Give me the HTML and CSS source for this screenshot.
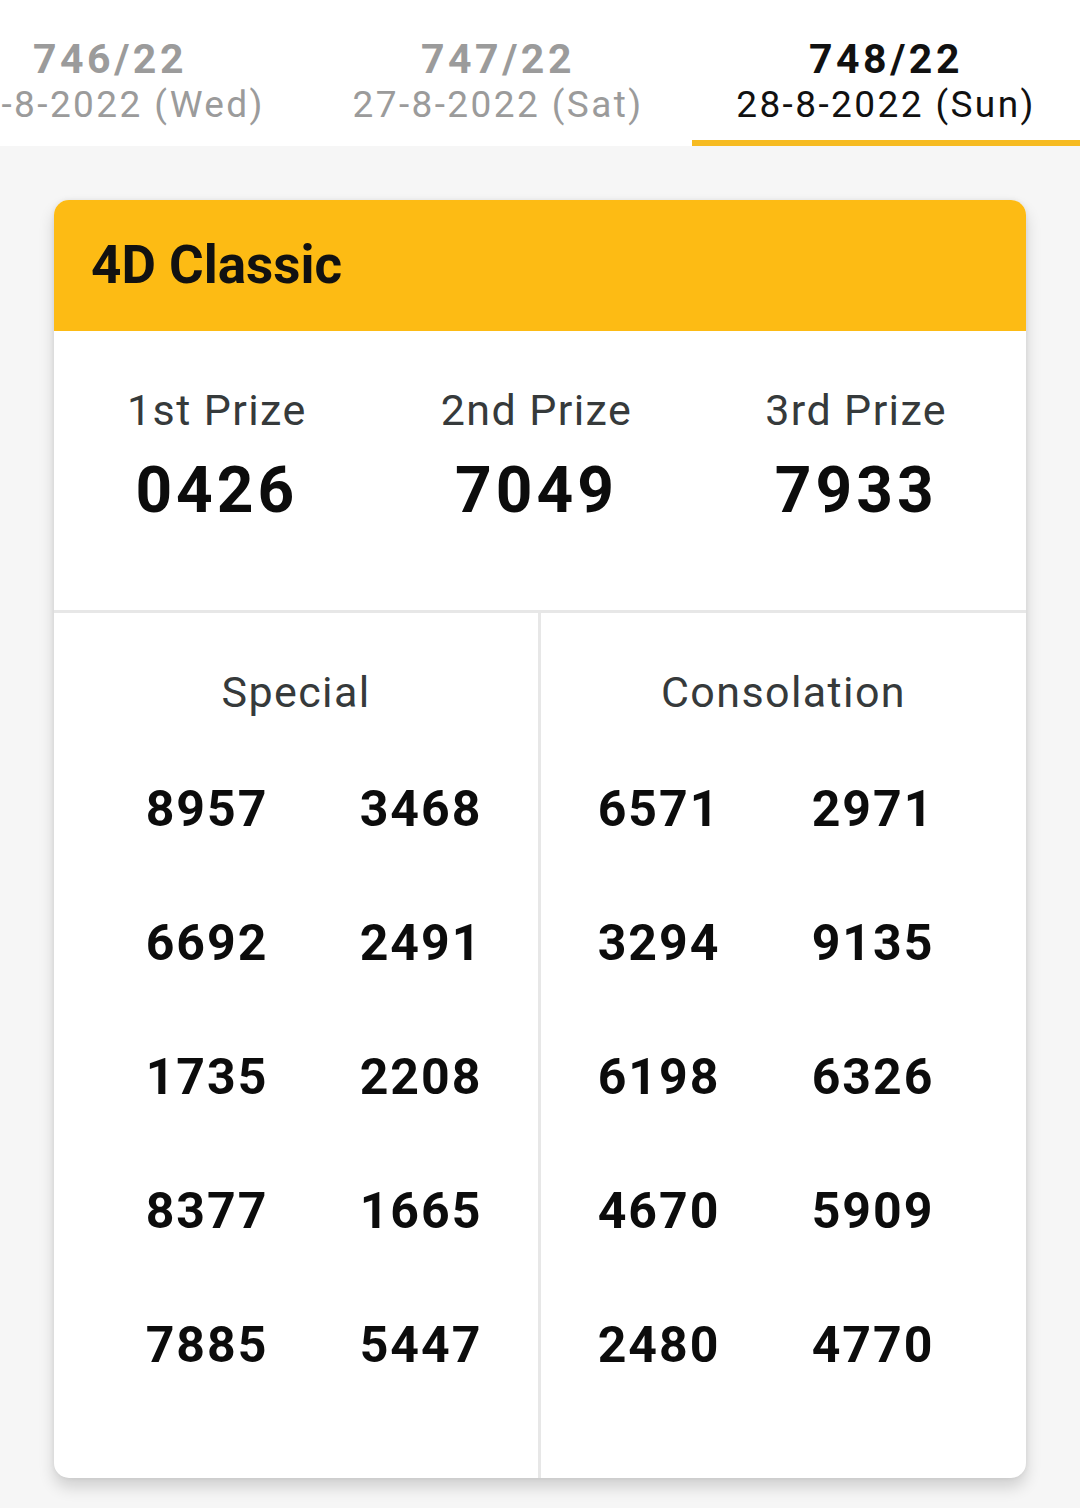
FILE: index.html
```html
<!DOCTYPE html>
<html lang="en">
<head>
<meta charset="utf-8">
<title>4D Results</title>
<link rel="stylesheet" href="styles.css">
</head>
<body>
<nav class="tabbar">
  <div class="tabstrip">
    <div class="tab">
      <div class="tab-no">746/22</div>
      <div class="tab-date">24-8-2022 (Wed)</div>
    </div>
    <div class="tab">
      <div class="tab-no">747/22</div>
      <div class="tab-date">27-8-2022 (Sat)</div>
    </div>
    <div class="tab tab-active">
      <div class="tab-no">748/22</div>
      <div class="tab-date">28-8-2022 (Sun)</div>
    </div>
  </div>
</nav>

<main class="page">
  <section class="card">
    <header class="card-head">4D Classic</header>

    <div class="prizes">
      <div class="prize">
        <div class="label">1st Prize</div>
        <div class="prize-no">0426</div>
      </div>
      <div class="prize">
        <div class="label">2nd Prize</div>
        <div class="prize-no">7049</div>
      </div>
      <div class="prize">
        <div class="label">3rd Prize</div>
        <div class="prize-no">7933</div>
      </div>
    </div>

    <div class="groups">
      <div class="group group-left">
        <div class="label">Special</div>
        <div class="nums">
          <span>8957</span><span>3468</span>
          <span>6692</span><span>2491</span>
          <span>1735</span><span>2208</span>
          <span>8377</span><span>1665</span>
          <span>7885</span><span>5447</span>
        </div>
      </div>
      <div class="group group-right">
        <div class="label">Consolation</div>
        <div class="nums">
          <span>6571</span><span>2971</span>
          <span>3294</span><span>9135</span>
          <span>6198</span><span>6326</span>
          <span>4670</span><span>5909</span>
          <span>2480</span><span>4770</span>
        </div>
      </div>
    </div>
  </section>
</main>
</body>
</html>
```

FILE: styles.css
```css
* { box-sizing: border-box; }

html, body {
  margin: 0;
  padding: 0;
}

body {
  width: 1080px;
  min-height: 1508px;
  background: #f6f6f6;
  font-family: Roboto, "Liberation Sans", Arial, sans-serif;
  color: #111;
  overflow: hidden;
}

/* ---------- tabs ---------- */
.tabbar {
  background: #ffffff;
  height: 146px;
  overflow: hidden;
}

.tabstrip {
  display: flex;
  margin-left: -84px;
}

.tab {
  flex: 0 0 388px;
  height: 146px;
  padding-top: 36px;
  text-align: center;
  color: #9b9b9b;
  border-bottom: 6px solid transparent;
  white-space: nowrap;
}

.tab-active {
  color: #111;
  border-bottom-color: #f6bb22;
}

.tab-no {
  font-size: 41px;
  font-weight: 700;
  line-height: 46px;
  letter-spacing: 3.5px;
}

.tab-date {
  font-size: 37px;
  font-weight: 400;
  line-height: 46px;
  letter-spacing: 2.4px;
}

/* ---------- card ---------- */
.page {
  padding: 54px 54px 0;
}

.card {
  width: 972px;
  background: #ffffff;
  border-radius: 15px;
  overflow: hidden;
  box-shadow: 0 9px 16px rgba(0, 0, 0, 0.16), 0 0 5px rgba(0, 0, 0, 0.07);
}

.card-head {
  height: 131px;
  line-height: 131px;
  padding-left: 37px;
  background: #fdbb14;
  font-size: 53px;
  font-weight: 700;
  color: #111;
}

.label {
  font-size: 43px;
  line-height: 50px;
  font-weight: 400;
  color: #363a3b;
  letter-spacing: 1.4px;
  text-align: center;
}

/* ---------- top prizes ---------- */
.prizes {
  display: grid;
  grid-template-columns: 1fr 1fr 1fr;
  padding: 54px 10px 84px 3px;
  border-bottom: 3px solid #e7e7e7;
}

.prize {
  text-align: center;
}

.prize-no {
  margin-top: 21px;
  font-size: 64px;
  line-height: 70px;
  font-weight: 700;
  letter-spacing: 4px;
  color: #0c0c0c;
}

/* ---------- special / consolation ---------- */
.groups {
  display: grid;
  grid-template-columns: 484px 3px 485px;
}

.group {
  padding-top: 54px;
  padding-bottom: 66px;
}

.group-left {
  grid-column: 1;
  border-right: 3px solid #e7e7e7;
  width: 487px;
}

.group-right {
  grid-column: 3;
}

.nums {
  display: grid;
  grid-template-columns: 214px 214px;
  margin-top: 25px;
}

.group-left .nums {
  padding-left: 46px;
}

.group-right .nums {
  padding-left: 11px;
}

.nums span {
  display: block;
  text-align: center;
  font-size: 50px;
  line-height: 134px;
  font-weight: 700;
  letter-spacing: 2px;
  color: #0c0c0c;
}
```
